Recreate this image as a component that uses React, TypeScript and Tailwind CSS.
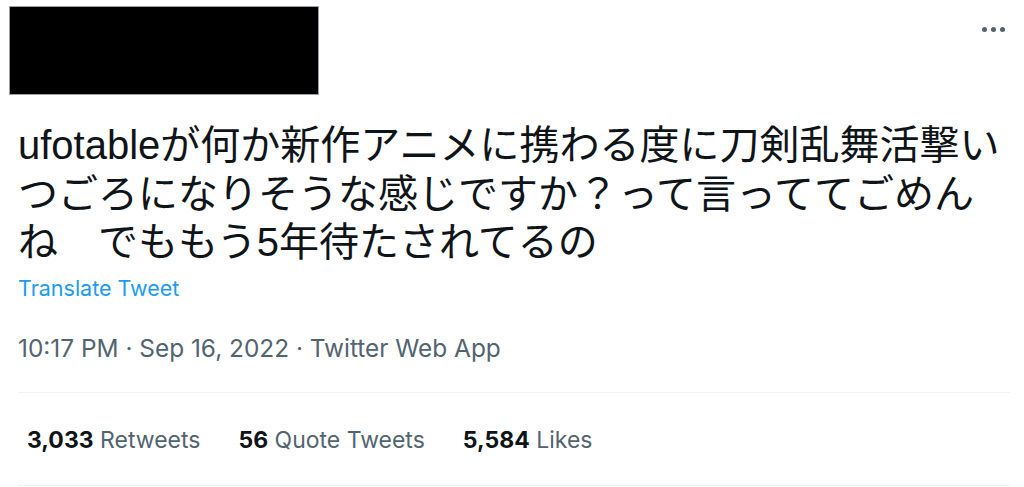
export default function App() {
  const ui = { fontFamily: 'Inter, "Noto Sans CJK JP", sans-serif' };
  const body = { fontFamily: '"Liberation Sans", "Noto Sans CJK JP", sans-serif' };
  return (
    <div className="w-[1024px] h-[487px] bg-white overflow-hidden" style={ui}>
      <div className="flex justify-between h-[110px]">
        <div className="ml-[9px] mt-[6px] w-[310px] h-[89px] bg-black border border-gray-400"></div>
        <div className="flex gap-[4px] mt-[27px] mr-[19px] h-[5px]">
          <span className="w-[5px] h-[5px] rounded-full bg-[#536471]"></span>
          <span className="w-[5px] h-[5px] rounded-full bg-[#536471]"></span>
          <span className="w-[5px] h-[5px] rounded-full bg-[#536471]"></span>
        </div>
      </div>
      <div className="pl-[18px] pr-[14px]">
        <p className="mt-[11px] text-[40px] leading-[48.5px] text-[#0f1419] whitespace-nowrap" style={body}>
          ufotableが何か新作アニメに携わる度に刀剣乱舞活撃い
          <br />
          つごろになりそうな感じですか？って言っててごめん
          <br />
          ね　でももう5年待たされてるの
        </p>
        <div className="mt-[8px] text-[21.5px] leading-[26px] text-[#1d9bf0]">Translate Tweet</div>
        <div className="mt-[32px] text-[24.4px] leading-[30px] text-[#536471]">
          10:17 PM · Sep 16, 2022 · Twitter Web App
        </div>
      </div>
      <div className="ml-[18px] mr-[14px] mt-[29px] border-t border-[#eff3f4]">
        <div className="flex h-[92px] pt-[4px] items-center gap-[38px] pl-[9px] text-[23px] text-[#536471]">
          <span><b className="font-bold text-[#0f1419]">3,033</b> Retweets</span>
          <span><b className="font-bold text-[#0f1419]">56</b> Quote Tweets</span>
          <span><b className="font-bold text-[#0f1419]">5,584</b> Likes</span>
        </div>
        <div className="border-t border-[#eff3f4]"></div>
      </div>
    </div>
  );
}
